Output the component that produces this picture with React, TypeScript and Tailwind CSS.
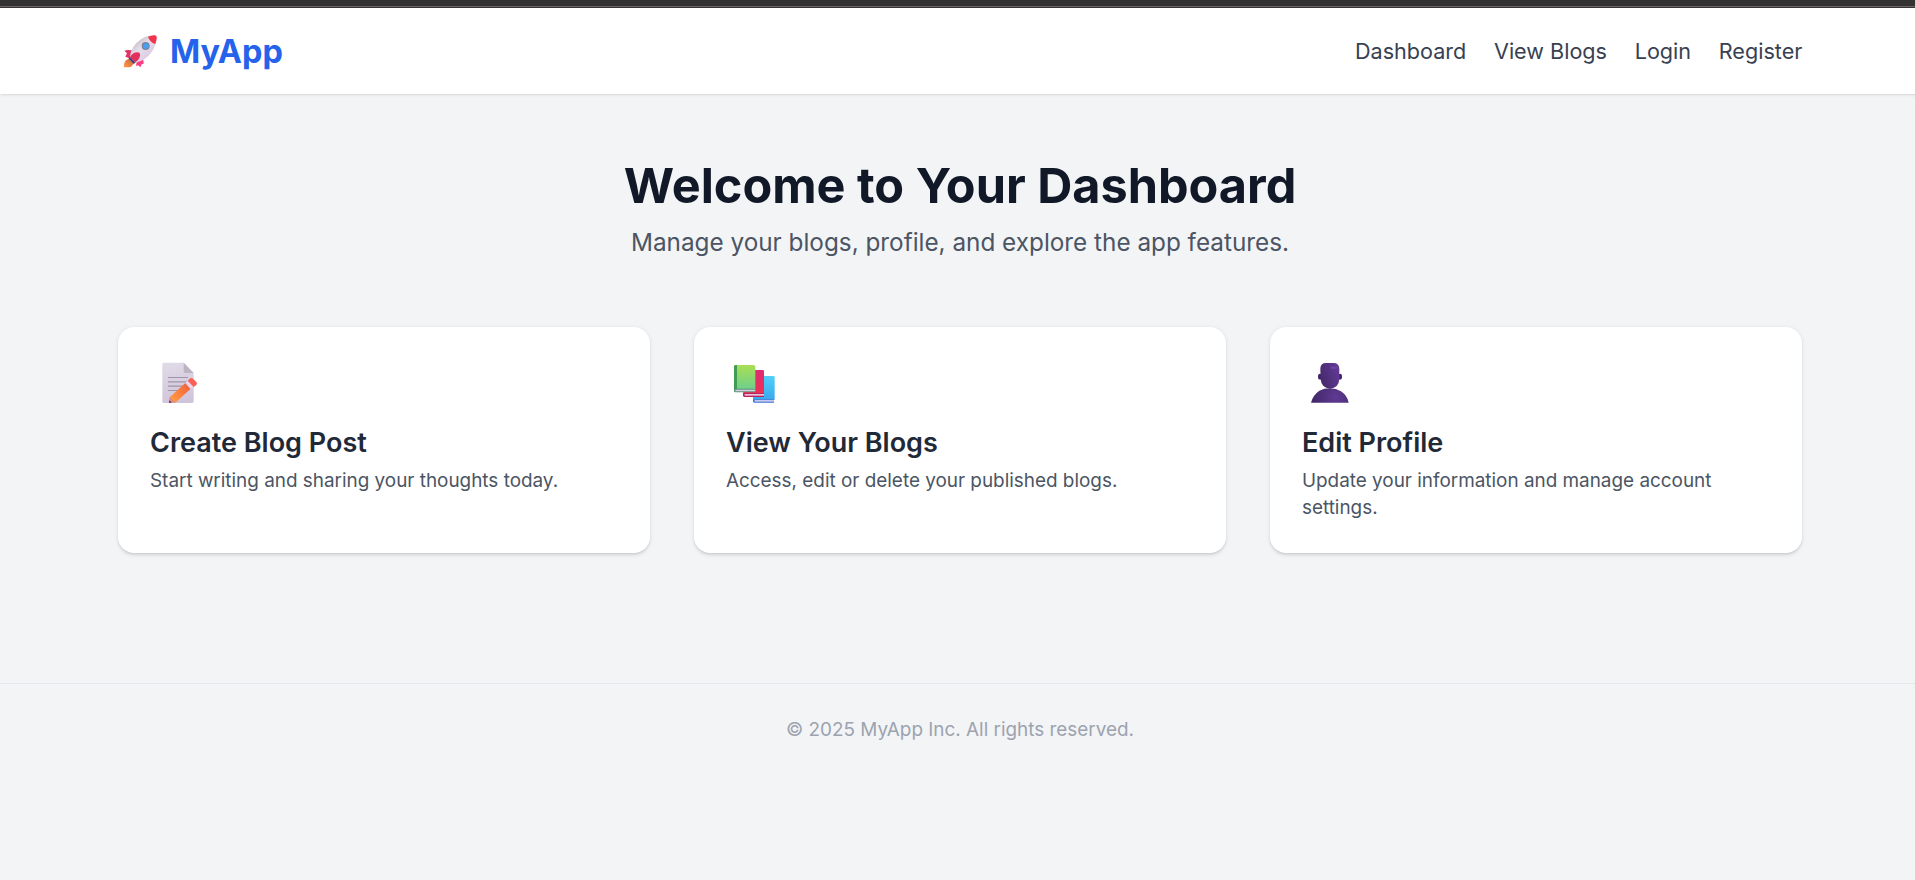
import type { ReactNode } from "react";

function RocketIcon() {
  return (
    <svg className="ml-[5.400px] h-[34px] w-[34px] shrink-0" viewBox="21 21 102 102" aria-hidden="true">
      <defs>
        <linearGradient id="rocketBody" x1="55" y1="45" x2="95" y2="90" gradientUnits="userSpaceOnUse">
          <stop offset="0" stopColor="#c9c2c9" />
          <stop offset=".4" stopColor="#e6dee9" />
          <stop offset="1" stopColor="#dccbe4" />
        </linearGradient>
        <linearGradient id="rocketFlame" x1="24" y1="118" x2="46" y2="98" gradientUnits="userSpaceOnUse">
          <stop offset="0" stopColor="#ff9a4a" />
          <stop offset="1" stopColor="#d8713c" />
        </linearGradient>
        <linearGradient id="rocketFin" x1="30" y1="70" x2="74" y2="112" gradientUnits="userSpaceOnUse">
          <stop offset="0" stopColor="#dd2f5f" />
          <stop offset="1" stopColor="#ff3f80" />
        </linearGradient>
      </defs>
      <path d="M24 118V108Q27 95 39 92L52 106Q49 118 38 118Z" fill="url(#rocketFlame)" />
      <path d="M52 68Q36 64 25 68L33 76L28 86L44 92L62 101L60 114L66 112L73 118L77 109L83 107Q84 92 72 84Z" fill="url(#rocketFin)" />
      <path d="M38 92L42 85L60 103L53 108Z" fill="#46437d" />
      <path d="M42 86Q45 54 73 35Q91 23 112 22Q122 20 122 31Q121 53 107 72Q89 98 59 104Z" fill="url(#rocketBody)" />
      <path d="M96 26Q105 23 115 22Q123 22 122 31Q121 40 118 48Q101 43 96 26Z" fill="#f3324e" />
      <path d="M42 87Q50 73 64 73Q74 74 72 84Q68 98 57 103Z" fill="#e22f5c" />
      <circle cx="89" cy="54" r="12" fill="#7b809a" />
      <circle cx="90" cy="54" r="8.500" fill="#4c9ff0" />
    </svg>
  );
}

function MemoIcon() {
  return (
    <svg className="h-[54px] w-[60px]" viewBox="0 27 180 162" aria-hidden="true">
      <defs>
        <linearGradient id="memoPage" x1="60" y1="38" x2="90" y2="158" gradientUnits="userSpaceOnUse">
          <stop offset="0" stopColor="#e0dae7" />
          <stop offset="1" stopColor="#d0c4da" />
        </linearGradient>
        <linearGradient id="memoPencil" x1="68" y1="145" x2="116" y2="108" gradientUnits="userSpaceOnUse">
          <stop offset="0" stopColor="#ff9740" />
          <stop offset="1" stopColor="#f2643e" />
        </linearGradient>
      </defs>
      <path d="M41 38H101L131 69V154Q131 159 126 159H41Q37 159 37 154V43Q37 38 41 38Z" fill="url(#memoPage)" />
      <path d="M101 38L131 69H106Q101 69 101 64Z" fill="#bdb3c2" />
      <path d="M54 82.500H114M54 95.500H110M54 108.500H98M54 121.500H84" stroke="#9e96a6" strokeWidth="3.600" />
      <path d="M57 158L59 142L64 138L80 155L73 158Z" fill="#d98e8d" />
      <path d="M57 158L58 151L65 158Z" fill="#552a4e" />
      <path d="M60 141L106 99L122 116L76 158Z" fill="url(#memoPencil)" />
      <path d="M106 99L114 91L131 109L122 117Z" fill="#e8d7ee" />
      <path d="M113 92L121 85Q125 82 129 86L139 96Q143 101 139 105L131 111Z" fill="#fb6054" />
    </svg>
  );
}

function BooksIcon() {
  return (
    <svg className="h-[54px] w-[60px]" viewBox="18 27 180 162" aria-hidden="true">
      <defs>
        <linearGradient id="bookGreen" x1="75" y1="45" x2="75" y2="117" gradientUnits="userSpaceOnUse">
          <stop offset="0" stopColor="#a9df53" />
          <stop offset="1" stopColor="#6ed08c" />
        </linearGradient>
        <linearGradient id="bookRed" x1="130" y1="60" x2="120" y2="132" gradientUnits="userSpaceOnUse">
          <stop offset="0" stopColor="#dc2d78" />
          <stop offset="1" stopColor="#ef2e50" />
        </linearGradient>
        <linearGradient id="bookBlue" x1="145" y1="78" x2="145" y2="150" gradientUnits="userSpaceOnUse">
          <stop offset="0" stopColor="#54cffb" />
          <stop offset="1" stopColor="#38a8ed" />
        </linearGradient>
      </defs>
      <path d="M104 78H160Q164 78 164 82V149H99V144Z" fill="url(#bookBlue)" />
      <path d="M99 148H162V158H103Q99 158 99 153Z" fill="#3b75d4" />
      <path d="M104 150H162V155H104Z" fill="#c9c9f0" />
      <path d="M76 60H128Q132 60 132 64V131H70V120Z" fill="url(#bookRed)" />
      <path d="M69 129H132V141H73Q69 141 69 136Z" fill="#bd255a" />
      <path d="M74 132H132V137H74Z" fill="#e9c1df" />
      <path d="M46 45H101Q106 45 106 50V118H42V49Q42 45 46 45Z" fill="url(#bookGreen)" />
      <path d="M42 49Q42 45 51 45V117H42Z" fill="#419b55" />
      <path d="M42 116H106V127H46Q42 127 42 122Z" fill="#4e8d6d" />
      <path d="M46 119H106V124H46Z" fill="#d8cde5" />
    </svg>
  );
}

function ProfileIcon() {
  return (
    <svg className="h-[54px] w-[60px]" viewBox="6 27 180 162" aria-hidden="true">
      <defs>
        <linearGradient id="profileHead" x1="60" y1="90" x2="120" y2="70" gradientUnits="userSpaceOnUse">
          <stop offset="0" stopColor="#45296b" />
          <stop offset="1" stopColor="#613a95" />
        </linearGradient>
        <radialGradient id="profileBody" cx="108" cy="142" r="70" gradientUnits="userSpaceOnUse">
          <stop offset="0" stopColor="#603a93" />
          <stop offset="1" stopColor="#42286b" />
        </radialGradient>
      </defs>
      <path d="M33 158Q38 136 58 122Q72 115 90 115Q108 115 123 124Q142 137 146 158Z" fill="url(#profileBody)" />
      <ellipse cx="60" cy="80" rx="6" ry="8.500" fill="#3f2465" />
      <ellipse cx="120" cy="80" rx="6" ry="8.500" fill="#42246d" />
      <path d="M61 56Q61 39 78 39H101Q117 39 118 56V88Q116 115 90 116Q64 114 62 88Z" fill="url(#profileHead)" />
      <ellipse cx="102" cy="53" rx="11" ry="4" fill="#6b42a0" />
    </svg>
  );
}

function FeatureCard({ icon, title, children }: { icon: ReactNode; title: string; children: ReactNode }) {
  return (
    <article className="rounded-[16.200px] bg-white p-[32.400px] shadow-[0_1.350px_4.050px_rgba(0,0,0,0.1),0_1.350px_2.700px_-1.350px_rgba(0,0,0,0.1)]">
      <div className="mb-[10.800px] h-[54px]">{icon}</div>
      <h2 className="text-[27px] leading-[37.800px] font-semibold text-[#1f2937]">{title}</h2>
      <p className="mt-[5.400px] text-[18.900px] leading-[27px] text-[#4b5563]">{children}</p>
    </article>
  );
}

const links = ["Dashboard", "View Blogs", "Login", "Register"];

export default function App() {
  return (
    <div className="h-[880px] w-full overflow-hidden">
      <div className="flex h-full w-[1920px] flex-col bg-[#f3f4f6] font-['Inter',sans-serif]">
        <div className="h-[8px] shrink-0 border-b border-[#3b3637] bg-[#333333] pt-[6px]">
          <div className="h-px bg-[#6b6566]" />
        </div>
        <header className="flex h-[86.400px] shrink-0 items-center justify-between bg-white px-[117.600px] shadow-[0_1.350px_4.050px_rgba(0,0,0,0.1),0_1.350px_2.700px_-0.500px_rgba(0,0,0,0.12)]">
          <a href="#" className="flex items-center gap-[13px] pt-[2px] text-[32.400px] font-bold text-[#2563eb]">
            <RocketIcon />
            <span>MyApp</span>
          </a>
          <nav className="flex gap-[27.700px] text-[21.600px] text-[#374151]">
            {links.map((label) => (
              <a key={label} href="#">{label}</a>
            ))}
          </nav>
        </header>
        <main className="px-[117.600px] py-[64.800px]">
          <div className="text-center">
            <h1 className="text-[48.600px] leading-[54px] font-bold text-[#111827]">Welcome to Your Dashboard</h1>
            <p className="mt-[10.800px] text-[24.300px] leading-[37.800px] text-[#4b5563]">Manage your blogs, profile, and explore the app features.</p>
          </div>
          <div className="mt-[64.800px] grid grid-cols-3 gap-[43.200px]">
            <FeatureCard icon={<MemoIcon />} title="Create Blog Post">Start writing and sharing your thoughts today.</FeatureCard>
            <FeatureCard icon={<BooksIcon />} title="View Your Blogs">Access, edit or delete your published blogs.</FeatureCard>
            <FeatureCard icon={<ProfileIcon />} title="Edit Profile">Update your information and manage account settings.</FeatureCard>
          </div>
        </main>
        <footer className="mt-[64.800px] border-t border-[#e5e7eb] py-[32.400px] text-center text-[18.900px] leading-[27px] text-[#9ca3af]">
          © 2025 MyApp Inc. All rights reserved.
        </footer>
      </div>
    </div>
  );
}
